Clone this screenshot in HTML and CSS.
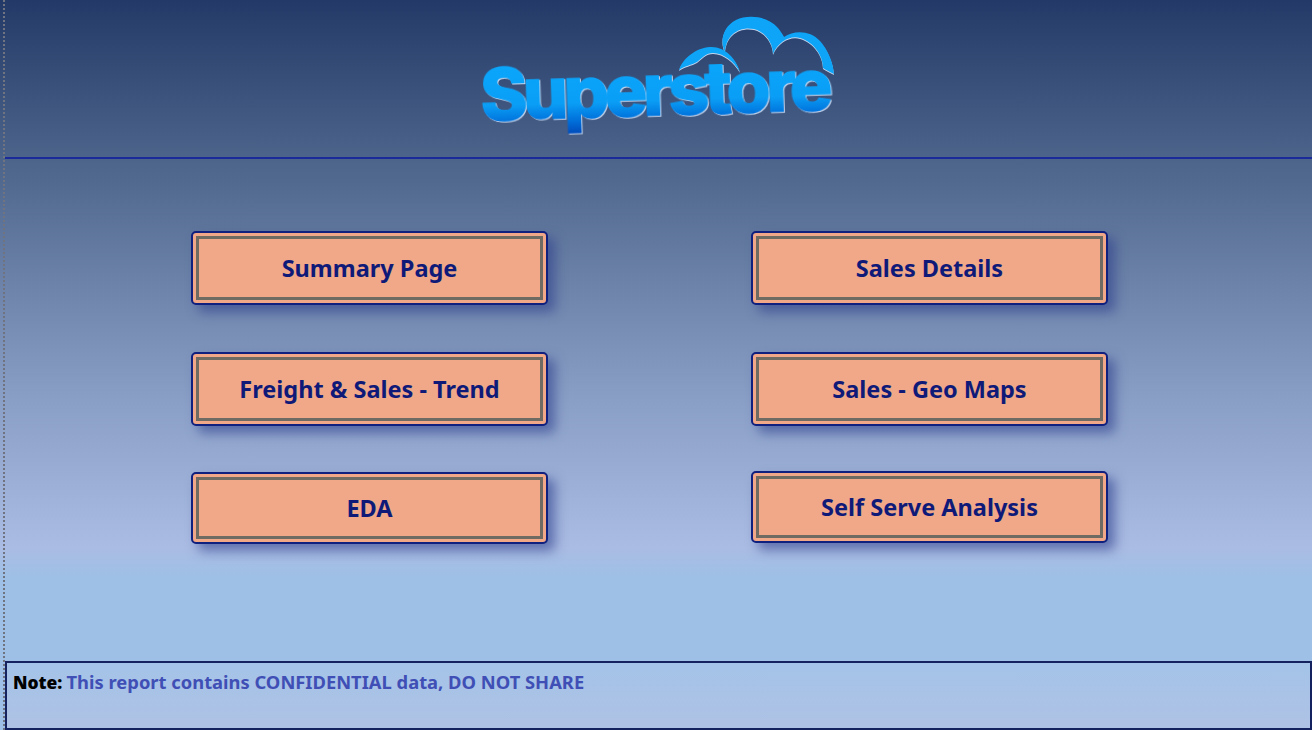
FILE: index.html
```html
<!doctype html>
<html>
	<head>
		<meta charset="utf-8">
		<title>Superstore</title>
		<link rel="stylesheet" href="styles.css">
	</head>
	<body>
		<div class="page">
			<div class="header">
				<svg class="logo" width="360" height="145" viewBox="0 0 360 145">
					<defs>
						<linearGradient id="letters" gradientUnits="userSpaceOnUse" x1="0" y1="50" x2="0" y2="120">
							<stop offset="0" stop-color="#0aa6fc"></stop>
							<stop offset="0.55" stop-color="#0a9ef6"></stop>
							<stop offset="0.8" stop-color="#0070da"></stop>
							<stop offset="1" stop-color="#0048b8"></stop>
						</linearGradient>
					</defs>
					<path class="cloud-edge" d="M247 40 C241 28 246 14 258 8 C270 2 290 4 300 16 C303 20 305 23 306 25 C316 18 332 18 342 29 C350 38 355 50 356 62 C352 60 348 58 345 56 C345 44 336 30 322 26 C312 23 300 30 295 42 C295 32 288 20 276 17 C262 14 248 22 247 40 Z"></path>
					<path class="cloud-edge" d="M201 58 C205 46 218 36 232 35 C246 34 258 46 262 60 C256 50 246 41 235 41 C228 41 224 46 219 50 C214 53 206 54 201 58 Z"></path>
					<text class="logo-text" x="3" y="103" transform="rotate(-1.8 180 100)" fill="url(#letters)" stroke="url(#letters)">Superstore</text>
				</svg>
			</div>
			<div class="menu">
				<div class="menu-col">
					<div class="nav-btn"><span class="nav-inner">Summary Page</span></div>
					<div class="nav-btn"><span class="nav-inner">Freight &amp; Sales - Trend</span></div>
					<div class="nav-btn last"><span class="nav-inner">EDA</span></div>
				</div>
				<div class="menu-col">
					<div class="nav-btn"><span class="nav-inner">Sales Details</span></div>
					<div class="nav-btn"><span class="nav-inner">Sales - Geo Maps</span></div>
					<div class="nav-btn last right"><span class="nav-inner">Self Serve Analysis</span></div>
				</div>
			</div>
			<div class="note"><b class="note-label">Note:</b> <span class="note-text">This report contains CONFIDENTIAL data, DO NOT SHARE</span></div>
		</div>
	</body>
</html>
```

FILE: styles.css
```css
html, body {
    margin: 0;
    padding: 0;
    height: 100%;
    overflow: hidden;
    font-family: "Noto Sans", "Open Sans", sans-serif;
}
body {
    background: linear-gradient(to bottom, #233a68 0, #52698f 180px, #8a9fc6 400px, #aabce3 548px, #9ec0e6 578px, #9ec0e6 100%);
}
.page {
    height: 730px;
    margin-left: 5px;
    display: flex;
    flex-direction: column;
    position: relative;
}
.page::before {
    content: "";
    position: absolute;
    left: -2px;
    top: 0;
    bottom: 0;
    border-left: 2px dotted #6f7480;
}
.header {
    height: 157px;
    border-bottom: 2px solid #1a2a98;
    display: flex;
    justify-content: center;
    align-items: flex-start;
    flex-shrink: 0;
}
.logo {
    margin: 12px 0 0 -1px;
}
.logo-text {
    font-family: "Inter", "Liberation Sans", sans-serif;
    font-weight: 800;
    font-size: 71px;
    letter-spacing: -4.35px;
    stroke-width: 1.5;
    filter: drop-shadow(1px 1px 0 #c6d6ee);
}
.cloud-edge {
    fill: #0ea5f8;
    filter: drop-shadow(0 1px 0 #c6d6ee);
}
.menu {
    display: flex;
    gap: 203px;
    padding: 72px 0 0 186px;
}
.menu-col {
    display: flex;
    flex-direction: column;
    gap: 47px;
    width: 357px;
}
.nav-btn {
    height: 74px;
    box-sizing: border-box;
    background: #f0a889;
    border: 2.5px solid #10207f;
    border-radius: 5px;
    padding: 3px;
    display: flex;
    box-shadow: 7px 7px 12px rgba(45, 62, 140, 0.6);
}
.nav-btn.last {
    height: 72px;
    margin-top: -1px;
}
.nav-btn.right {
    margin-top: -2px;
}
.nav-inner {
    flex: 1;
    border: 3px solid #6f6a62;
    display: flex;
    align-items: center;
    justify-content: center;
    font-size: 23.5px;
    font-weight: 700;
    color: #0f1a78;
}
.note {
    position: absolute;
    left: 0;
    right: 0;
    bottom: 0;
    height: 69px;
    box-sizing: border-box;
    border: 2px solid #14235f;
    border-top-width: 2.5px;
    background: linear-gradient(to bottom, #a4c3e8, #aec2e5);
    padding: 6px 6px;
    font-weight: 700;
    color: #000;
}
.note-label {
    font-size: 17.4px;
}
.note-text {
    font-size: 18.35px;
    color: #3f4fb5;
}
```
